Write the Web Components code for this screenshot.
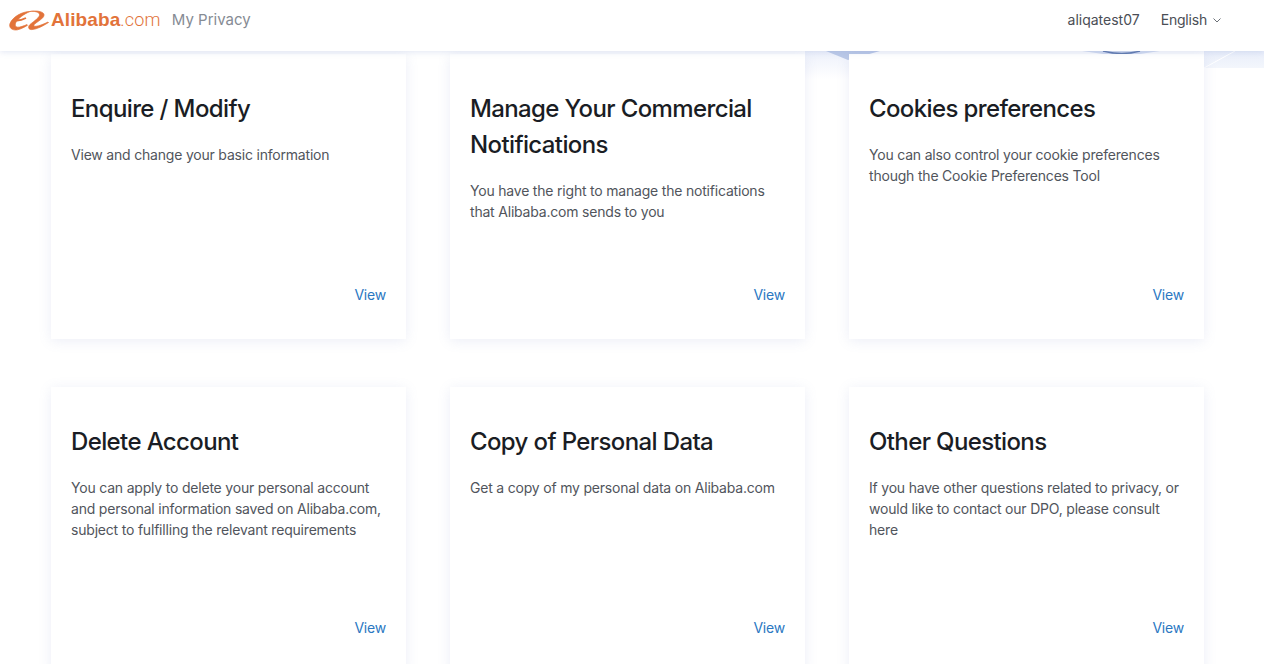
<!DOCTYPE html>
<html lang="en">
<head>
<meta charset="utf-8">
<title>My Privacy</title>
<style>
  html, body { margin: 0; height: 664px; overflow: hidden; background: #fff; }
  body { font-family: Inter, "Liberation Sans", sans-serif; }
</style>
</head>
<body>
<privacy-page>
  <privacy-header slot="header"></privacy-header>
  <privacy-card heading="Enquire / Modify">View and change your basic information</privacy-card>
  <privacy-card heading="Manage Your Commercial Notifications">You have the right to manage the notifications that Alibaba.com sends to you</privacy-card>
  <privacy-card heading="Cookies preferences">You can also control your cookie preferences though the Cookie Preferences Tool</privacy-card>
  <privacy-card heading="Delete Account">You can apply to delete your personal account and personal information saved on Alibaba.com, subject to fulfilling the relevant requirements</privacy-card>
  <privacy-card heading="Copy of Personal Data">Get a copy of my personal data on Alibaba.com</privacy-card>
  <privacy-card heading="Other Questions">If you have other questions related to privacy, or would like to contact our DPO, please consult here</privacy-card>
</privacy-page>
<script>
class PrivacyHeader extends HTMLElement {
  constructor() {
    super();
    this.attachShadow({ mode: 'open' });
    this.shadowRoot.innerHTML = `
      <style>
        :host {
          display: flex;
          align-items: center;
          justify-content: space-between;
          height: 51px;
          padding: 0 43px 12px 9px;
          box-sizing: border-box;
          background: #fff;
          box-shadow: 0 1px 6px rgba(120, 140, 200, 0.22);
          position: relative;
          z-index: 2;
        }
        .left, .right { display: flex; align-items: center; }
        .logo { display: flex; align-items: center; color: #e2733a; text-decoration: none; }
        .logo svg { display: block; margin-right: 2px; }
        .word { font: bold 19px "Liberation Sans", sans-serif; letter-spacing: 0.1px; }
        .dot { font: 300 18px Roboto, sans-serif; letter-spacing: 0.2px; }
        .title { margin-left: 11px; font-size: 15px; color: #868b94; }
        .user { font-size: 14px; color: #4a4e55; }
        .lang { margin-left: 21px; font-size: 14px; letter-spacing: -0.2px; color: #4a4e55; display: flex; align-items: center; }
        .lang svg { margin-left: 6px; margin-top: 2px; }
      </style>
      <div class="left">
        <a class="logo">
          <svg width="40" height="22" viewBox="0 0 40 22" fill="#e2733a" stroke="#e2733a" stroke-width="0.7" stroke-linejoin="round">
            <path d="M21 2.5C13 2.5 3.5 8 1 14.5C-0.5 19 3.5 21.8 8.5 20.8C12 20 15.5 18.2 18.5 16.3L18 15.6C14.5 17 11 18.3 8.8 18.2C6 18 5.8 15.5 7 13.3C9.5 9 15 5 21 2.5Z"/>
            <path d="M8 11.5C11 11.5 14 10.5 17 9" fill="none" stroke-width="1.9"/>
            <path d="M21 2.5C25 1.8 30 3 30.5 5.5C31 8.5 25 12 21 15.5C18.5 18 19.5 20.8 23 20.6C28 20.2 34 17 39.5 13.5L39 13C33 16 28 17.5 26 17.3C24 17 25 15.5 27 14C31 11 35.5 8.5 35 5.5C34.5 2.5 27 1.2 21 2.5Z"/>
          </svg>
          <span class="word">Alibaba</span><span class="dot">.com</span>
        </a>
        <span class="title">My Privacy</span>
      </div>
      <div class="right">
        <span class="user">aliqatest07</span>
        <span class="lang">English
          <svg width="8" height="5" viewBox="0 0 8 5" fill="none" stroke="#6b7077" stroke-width="1"><path d="M0.5 0.5L4 4L7.5 0.5"/></svg>
        </span>
      </div>
    `;
  }
}
customElements.define('privacy-header', PrivacyHeader);

class PrivacyCard extends HTMLElement {
  constructor() {
    super();
    this.attachShadow({ mode: 'open' });
    this.shadowRoot.innerHTML = `
      <style>
        :host {
          display: flex;
          flex-direction: column;
          height: 285px;
          box-sizing: border-box;
          padding: 37px 20px 34px;
          background: #fff;
          box-shadow: 0 2px 12px rgba(120, 135, 200, 0.14);
        }
        h2 { margin: 0 0 17px; font-size: 24px; line-height: 36px; font-weight: 500; letter-spacing: -0.62px; color: #1a1d24; }
        p { margin: 0; font-size: 14px; line-height: 21px; letter-spacing: -0.2px; color: #51555c; }
        a { margin-top: auto; align-self: flex-end; font-size: 14px; line-height: 21px; letter-spacing: -0.2px; color: #2b78c2; text-decoration: none; }
      </style>
      <h2></h2>
      <p><slot></slot></p>
      <a href="#">View</a>
    `;
    this.shadowRoot.querySelector('h2').textContent = this.getAttribute('heading');
  }
}
customElements.define('privacy-card', PrivacyCard);

class PrivacyPage extends HTMLElement {
  constructor() {
    super();
    this.attachShadow({ mode: 'open' });
    this.shadowRoot.innerHTML = `
      <style>
        :host { display: block; position: relative; height: 664px; overflow: hidden; }
        .banner { position: absolute; top: 51px; left: 0; }
        main {
          position: relative;
          display: grid;
          grid-template-columns: repeat(3, 355px);
          column-gap: 44px;
          row-gap: 48px;
          padding: 3px 0 0 51px;
        }
      </style>
      <slot name="header"></slot>
      <svg class="banner" width="1264" height="30" viewBox="0 0 1264 30">
        <defs>
          <linearGradient id="fade" x1="0" y1="0" x2="0" y2="1">
            <stop offset="0" stop-color="#e9eefa"/><stop offset="1" stop-color="#f3f6fc"/>
          </linearGradient>
          <linearGradient id="gap" x1="0" y1="0" x2="0" y2="1">
            <stop offset="0" stop-color="#edf1fb"/><stop offset="1" stop-color="#ffffff"/>
          </linearGradient>
        </defs>
        <rect x="1204" y="0" width="60" height="17" fill="url(#fade)"/>
        <rect x="805" y="0" width="44" height="28" fill="url(#gap)"/>
        <path d="M826 0H880L848 9Z" fill="#bccae8"/>
        <path d="M1082 0H1160L1140 3H1103Z" fill="#d5def2"/>
        <path d="M1103 0Q1122 5 1140 0" stroke="#5f79ad" stroke-width="1.4" fill="none"/>
        <path d="M1204 17L1235 0" stroke="#fff" stroke-width="1" fill="none"/>
      </svg>
      <main><slot></slot></main>
    `;
  }
}
customElements.define('privacy-page', PrivacyPage);
</script>
</body>
</html>
